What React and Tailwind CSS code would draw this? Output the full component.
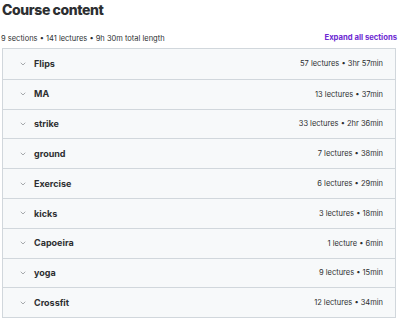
import { ChevronDown } from "lucide-react";

const sections = [
  { title: "Flips", meta: "57 lectures • 3hr 57min" },
  { title: "MA", meta: "13 lectures • 37min" },
  { title: "strike", meta: "33 lectures • 2hr 36min" },
  { title: "ground", meta: "7 lectures • 38min" },
  { title: "Exercise", meta: "6 lectures • 29min" },
  { title: "kicks", meta: "3 lectures • 18min" },
  { title: "Capoeira", meta: "1 lecture • 6min" },
  { title: "yoga", meta: "9 lectures • 15min" },
  { title: "Crossfit", meta: "12 lectures • 34min" },
];

export default function App() {
  return (
    <div className="min-h-screen bg-white text-[#2d2f31] [font-family:Inter,'Liberation_Sans',sans-serif]">
      <h2 className="h-[20px] pl-[2px] pt-[1px] text-[14px] font-extrabold leading-[17px] tracking-[-0.4px]">Course content</h2>
      <div className="flex h-[28px] items-end justify-between pb-[6px] pl-px pr-[3px]">
        <span className="text-[7.5px] leading-none">9 sections • 141 lectures • 9h 30m total length</span>
        <button className="text-[7.7px] font-bold leading-none text-[#6d28d2]">Expand all sections</button>
      </div>
      <div className="ml-[2px] mr-[4px] border border-[#d1d7dc]">
        {sections.map((s, i) => (
          <div
            key={s.title}
            className={
              "flex h-[29.8px] items-center justify-between bg-[#f7f9fa] pl-[16px] pr-[12px]" +
              (i > 0 ? " border-t border-[#d1d7dc]" : "")
            }
          >
            <div className="flex items-center gap-[7px]">
              <ChevronDown className="h-[8px] w-[8px] text-[#6a6f73]" strokeWidth={1.75} />
              <span className="text-[9px] font-bold">{s.title}</span>
            </div>
            <span className="text-[7.5px]">{s.meta}</span>
          </div>
        ))}
      </div>
    </div>
  );
}
